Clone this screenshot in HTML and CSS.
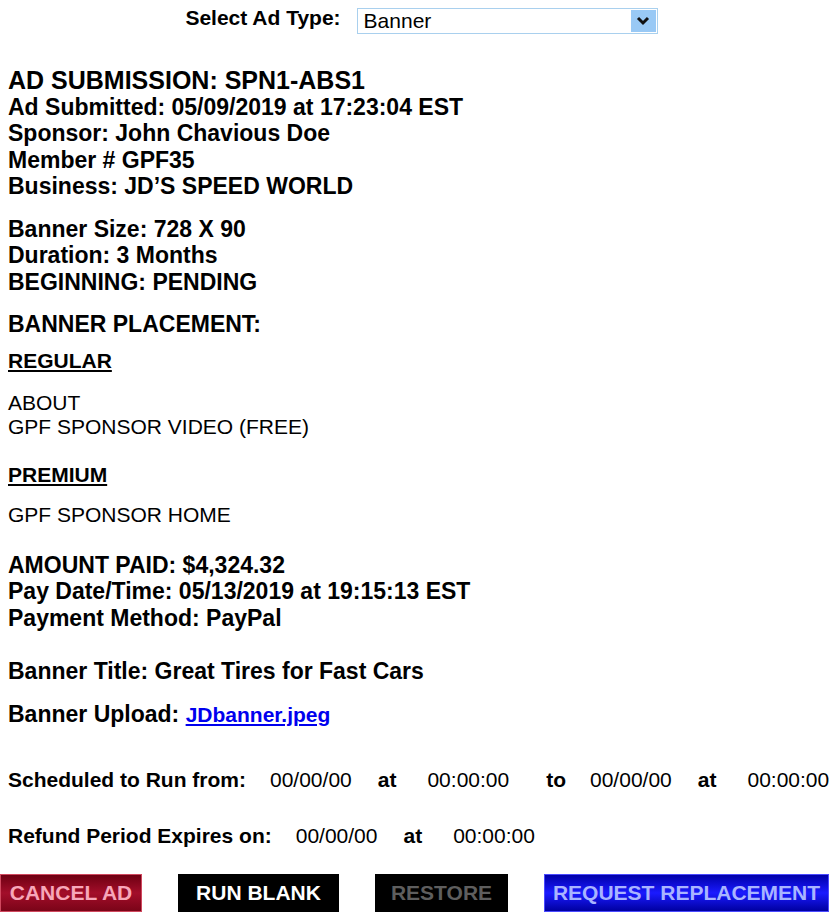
FILE: index.html
```html
<!DOCTYPE html>
<html lang="en">
<head>
  <meta charset="UTF-8">
  <title>Ad Submission</title>
  <link rel="stylesheet" href="styles.css">
</head>
<body>

  <div class="type-row">
    <label for="ad-type">Select Ad Type:</label>
    <div class="select-box">
      <span id="ad-type">Banner</span>
      <span class="select-arrow">
        <svg width="14" height="10" viewBox="0 0 14 10"><path d="M2 2 L7 7 L12 2" fill="none" stroke="#111" stroke-width="3"/></svg>
      </span>
    </div>
  </div>

  <div class="info info-first">
    <div class="title">AD SUBMISSION: SPN1-ABS1</div>
    <div>Ad Submitted: 05/09/2019 at 17:23:04 EST</div>
    <div>Sponsor: John Chavious Doe</div>
    <div>Member # GPF35</div>
    <div>Business: JD’S SPEED WORLD</div>
  </div>

  <div class="info">
    <div>Banner Size: 728 X 90</div>
    <div>Duration: 3 Months</div>
    <div>BEGINNING: PENDING</div>
  </div>

  <div class="info">
    <div>BANNER PLACEMENT:</div>
  </div>

  <div class="placement-head">REGULAR</div>
  <div class="placement-list">
    <div>ABOUT</div>
    <div>GPF SPONSOR VIDEO (FREE)</div>
  </div>

  <div class="placement-head head-premium">PREMIUM</div>
  <div class="placement-list list-premium">
    <div>GPF SPONSOR HOME</div>
  </div>

  <div class="info info-paid">
    <div>AMOUNT PAID: $4,324.32</div>
    <div>Pay Date/Time: 05/13/2019 at 19:15:13 EST</div>
    <div>Payment Method: PayPal</div>
  </div>

  <div class="info info-title">
    <div>Banner Title: Great Tires for Fast Cars</div>
  </div>

  <div class="info">
    <div>Banner Upload: <a href="#">JDbanner.jpeg</a></div>
  </div>

  <div class="schedule schedule-run">
    <span class="lbl">Scheduled to Run from:</span>
    <span class="val">00/00/00</span>
    <span class="lbl sep">at</span>
    <span class="val time">00:00:00</span>
    <span class="lbl sep to">to</span>
    <span class="val">00/00/00</span>
    <span class="lbl sep">at</span>
    <span class="val time">00:00:00</span>
  </div>

  <div class="schedule schedule-refund">
    <span class="lbl">Refund Period Expires on:</span>
    <span class="val">00/00/00</span>
    <span class="lbl sep">at</span>
    <span class="val time">00:00:00</span>
  </div>

  <div class="actions">
    <button class="btn btn-cancel">CANCEL AD</button>
    <button class="btn btn-blank">RUN BLANK</button>
    <button class="btn btn-restore">RESTORE</button>
    <button class="btn btn-replace">REQUEST REPLACEMENT</button>
  </div>

</body>
</html>
```

FILE: styles.css
```css
* {
  box-sizing: border-box;
}

body {
  font-family: "Liberation Sans", Arial, sans-serif;
  margin: 0;
  padding: 0 0 0 8px;
  background: #fff;
  color: #000;
}

/* Ad type selector */
.type-row {
  display: flex;
  justify-content: center;
  align-items: center;
  gap: 16px;
  padding-top: 8px;
  padding-right: 2px;
}

.type-row label {
  font-weight: bold;
  font-size: 21px;
  margin-top: -6px;
}

.select-box {
  display: flex;
  align-items: center;
  justify-content: space-between;
  width: 301px;
  height: 26px;
  border: 1px solid #a9d0ee;
  padding: 0 1px 0 6px;
  font-size: 21px;
}

.select-arrow {
  display: flex;
  align-items: center;
  justify-content: center;
  width: 25px;
  height: 22px;
  background: #99c9f5;
}

/* Submission details */
.info {
  font-weight: bold;
  font-size: 23px;
  line-height: 26.5px;
  margin-top: 16px;
}

.info-first {
  margin-top: 33px;
}

.info .title {
  font-size: 25px;
}

.info a {
  color: #0000ee;
  font-size: 21px;
}

.placement-head {
  font-weight: bold;
  font-size: 21px;
  line-height: 22px;
  text-decoration: underline;
  margin-top: 12px;
}

.head-premium {
  margin-top: 25px;
}

.placement-list {
  font-size: 21px;
  line-height: 24px;
  margin-top: 19px;
}

.list-premium {
  margin-top: 17px;
}

.info-paid {
  margin-top: 25px;
}

.info-title {
  margin-top: 27px;
}

/* Schedule rows */
.schedule {
  display: flex;
  align-items: baseline;
  font-size: 21px;
  line-height: 22px;
}

.schedule-run {
  margin-top: 41px;
}

.schedule-refund {
  margin-top: 34px;
}

.schedule .lbl {
  font-weight: bold;
}

.schedule .val {
  margin-left: 24px;
}

.schedule .sep {
  margin-left: 26px;
}

.schedule .time {
  margin-left: 31px;
}

.schedule .to {
  margin-left: 37px;
}

/* Action buttons */
.actions {
  display: flex;
  gap: 36px;
  margin: 27px 0 0 -8px;
}

.btn {
  font-family: "Liberation Sans", Arial, sans-serif;
  font-weight: bold;
  font-size: 21px;
  height: 38px;
  padding: 0;
  cursor: pointer;
  text-align: center;
}

.btn-cancel {
  width: 142px;
  color: #f7a7b9;
  background: linear-gradient(#6e0012, #a30e2a 50%, #7a0418);
  border: 1px solid #d0485e;
}

.btn-blank {
  width: 161px;
  color: #fff;
  background: #000;
  border: 1px solid #000;
}

.btn-restore {
  width: 133px;
  color: #5e5e5e;
  background: #000;
  border: 1px solid #000;
}

.btn-replace {
  width: 285px;
  color: #a9b4ff;
  background: linear-gradient(#0000a8, #1a1aff 50%, #0000a0);
  border: 1px solid #4a4aff;
}
```
